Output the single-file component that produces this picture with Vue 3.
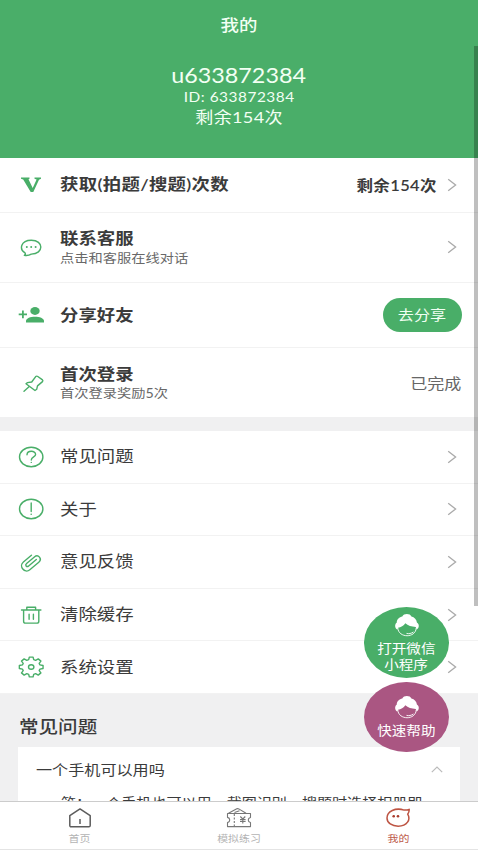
<script setup>
const accountRows = [
  { icon: 'vip', title: '获取(拍题/搜题)次数', value: '剩余154次', arrow: true, size: 'r1' },
  { icon: 'chat', title: '联系客服', sub: '点击和客服在线对话', arrow: true, size: 'r2' },
  { icon: 'invite', title: '分享好友', button: '去分享', size: 'r3' },
  { icon: 'pin', title: '首次登录', sub: '首次登录奖励5次', status: '已完成', size: 'r4' },
]
const menuRows = [
  { icon: 'help', title: '常见问题' },
  { icon: 'about', title: '关于' },
  { icon: 'clip', title: '意见反馈' },
  { icon: 'trash', title: '清除缓存' },
  { icon: 'gear', title: '系统设置' },
]

// Outline of an eight-toothed cog, slightly wider than tall
function cogPath(cx, cy) {
  const points = []
  for (let k = 0; k < 8; k++) {
    for (const [offset, scale] of [[-16, 0.76], [-9, 1], [9, 1], [16, 0.76]]) {
      const a = ((k * 45 + offset) * Math.PI) / 180
      points.push(`${(cx + Math.cos(a) * 12 * scale).toFixed(2)} ${(cy + Math.sin(a) * 10 * scale).toFixed(2)}`)
    }
  }
  return `M${points.join('L')}z`
}

const icons = {
  vip: '<path fill="#49ae68" stroke="none" d="M4 4.500h8.500v1.300l-1 .4 4.200 8.800 3.900-8.500-2.100-.7V4.500H24v1.300l-2 .9L16.300 19h-2.600L6.200 6.600 4 5.800z"/>',
  chat: '<path d="M7.300 20.300C8.500 19.800 8.600 19 8 17.900C2.200 14.600 3.400 5.200 14.300 5.200C27 5.200 27 19 14.300 19.100C12.200 20.400 9.800 20.700 7.300 20.300z"/><g fill="#49ae68" stroke="none"><circle cx="9.800" cy="12" r="1"/><circle cx="14.200" cy="12" r="1"/><circle cx="18.600" cy="12" r="1"/></g>',
  invite: '<g fill="#49ae68" stroke="none"><ellipse cx="18" cy="8" rx="4.700" ry="3.900"/><path d="M9 19.500v-1.500c0-5.800 18-5.800 18 0v1.500z"/><path d="M5 7.500h1.800v3h3.200v1.800H6.800v3H5v-3H1.700v-1.800H5z"/></g>',
  pin: '<path d="M7 20.200l5-4.400M9 12.700l1.500-1.100 4.200-.6 4-5.400q1-.9 2.100-.1l4.700 3.400q.8.800 0 1.700l-5 4.300-.8 3.400-1.700 1.200z"/>',
  help: '<ellipse cx="14.200" cy="12" rx="11.700" ry="9.700"/><path d="M10 9.700c.2-4.500 8.600-4.500 8.600-.3 0 2.600-4.300 2.300-4.300 5.600"/><circle cx="14.300" cy="17.400" r=".7" fill="#49ae68" stroke="none"/>',
  about: '<ellipse cx="14.200" cy="12" rx="11.700" ry="9.700"/><path d="M14.200 6v8.600"/><circle cx="14.200" cy="17.200" r=".8" fill="#49ae68" stroke="none"/>',
  clip: '<g transform="rotate(-40 14.200 12)"><path d="M20.500 12H10.500c-2.600 0-2.600-3.200 0-3.200h10.200c5 0 5 6.800 0 6.800H9c-6.600 0-6.600-10 0-10h10.500" transform="translate(-.8 1.400)"/></g>',
  trash: '<path d="M4.500 7h19.400M6.600 7v11.200c0 1.300.6 1.900 1.900 1.900h11.400c1.300 0 1.900-.6 1.900-1.900V7M9.800 6.800V4.200h8.800v2.600M12.100 11.200v5M16.400 11.200v5"/>',
  gear: `<path d="${cogPath(14.2, 12)}"/><ellipse cx="14.200" cy="12" rx="2.700" ry="2.300"/>`,
}
</script>

<template>
  <div class="screen">
    <main class="content">
      <header class="hero">
        <h1 class="page-title"><span class="wide mid">我的</span></h1>
        <div class="name"><span class="wide mid">u633872384</span></div>
        <div class="uid"><span class="wide mid">ID: 633872384</span></div>
        <div class="left"><span class="wide mid">剩余154次</span></div>
      </header>

      <section class="group">
        <div v-for="r in accountRows" :key="r.icon" class="row" :class="r.size">
          <svg class="icon" viewBox="0 0 28 24" v-html="icons[r.icon]"></svg>
          <div class="text">
            <div class="title strong"><span class="wide">{{ r.title }}</span></div>
            <div v-if="r.sub" class="sub"><span class="wide">{{ r.sub }}</span></div>
          </div>
          <div v-if="r.value" class="value"><span class="wide end">{{ r.value }}</span></div>
          <button v-if="r.button" class="share"><span class="wide mid">{{ r.button }}</span></button>
          <div v-if="r.status" class="status"><span class="wide end">{{ r.status }}</span></div>
          <svg v-if="r.arrow" class="arrow" viewBox="0 0 10 14"><path d="M1.200 1.200 8.600 7 1.200 12.800" /></svg>
        </div>
      </section>

      <section class="group menu">
        <div v-for="r in menuRows" :key="r.icon" class="row">
          <svg class="icon" viewBox="0 0 28 24" v-html="icons[r.icon]"></svg>
          <div class="text">
            <div class="title"><span class="wide">{{ r.title }}</span></div>
          </div>
          <svg class="arrow" viewBox="0 0 10 14"><path d="M1.200 1.200 8.600 7 1.200 12.800" /></svg>
        </div>
      </section>

      <section class="faq">
        <h2><span class="wide">常见问题</span></h2>
        <div class="card">
          <div class="question">
            <span class="wide">一个手机可以用吗</span>
            <svg viewBox="0 0 12 7"><path d="M.8 6.200 6 1l5.200 5.200" /></svg>
          </div>
          <p><span class="wide">答：一个手机也可以用，截图识别，搜题时选择相册即</span></p>
        </div>
      </section>
    </main>

    <nav class="tabs">
      <div class="tab">
        <svg viewBox="0 0 26 22" stroke="#5c5c5c"><path d="M2.800 8.700 13 1.900l10.200 6.800v9.800c0 .9-.5 1.300-1.300 1.300H4.100c-.8 0-1.300-.4-1.300-1.300zM13 12v5" /></svg>
        <span class="wide mid">首页</span>
      </div>
      <div class="tab">
        <svg viewBox="0 0 26 22" stroke="#777" class="ticket"><path d="M1.500 6.500h23v4c-3 .7-3 4.300 0 5v4.100h-23v-4c3-.8 3-4.500 0-5.200zM2.500 6.300l8.300-4.500q1-.4 2 .1L20 6.200M8.500 5.500l5-1.800" /><path stroke-dasharray="2 1.500" d="M8.300 7v12" /><path d="M14.300 9.500l2.500 2.500 2.500-2.500M14 12.600h5.600M14 14.500h5.600M16.800 12v4.600" /></svg>
        <span class="wide mid">模拟练习</span>
      </div>
      <div class="tab active">
        <svg viewBox="0 0 26 22" stroke="#bd5443"><path d="M24.200 2.300c-1.400.8-3.200.8-5 .8C10.300.2 2 4.500 2 11c0 4.900 4.900 8.200 11.200 8.200 9 0 12.700-6.700 9.500-12 .9-1.300 1.600-3 1.500-4.900z" /><g fill="#a93a2b" stroke="none"><circle cx="8.700" cy="9.300" r="1.300" /><circle cx="13" cy="9.300" r="1.300" /></g></svg>
        <span class="wide mid">我的</span>
      </div>
    </nav>

    <div class="floats">
      <div v-for="f in [['打开微信', '小程序'], ['快速帮助']]" :key="f[0]" class="bubble" :class="{ plum: f.length === 1 }">
        <svg viewBox="0 0 26 24">
          <path fill="#fff" d="M3.300 16.500C.8 15.500.4 11 2.700 9.700 2.800 6.300 5.500 4 8.300 3.500 9.500.2 16.200.2 17.400 3.500c3 .8 5.300 3 5.500 6.100 2.600 1.300 2.600 5.900-.2 6.900l-1-2.600c-4.200-.1-7.700-1.300-10.400-3.600-1.500 2.300-4.500 4.200-7.200 4.500z" />
          <path fill="none" stroke="#fff" stroke-width=".9" d="M3.800 15C4.500 25.300 21.700 25.300 22.200 15M12.500 20.400c2.500.6 4.500.2 7-1.400" />
        </svg>
        <span v-for="line in f" :key="line" class="wide mid">{{ line }}</span>
      </div>
    </div>
    <div class="scrollbar"></div>
  </div>
</template>

<style>
body { margin: 0; overflow: hidden; }
</style>

<style scoped>
.screen {
  position: relative;
  width: 478px;
  height: 850px;
  display: flex;
  flex-direction: column;
  overflow: hidden;
  background: #f0f0f1;
  color: #3b3b3b;
  font-family: Lato, "Noto Sans CJK SC", sans-serif;
}
.wide {
  display: inline-block;
  white-space: nowrap;
  transform: scaleX(1.15);
  transform-origin: left center;
}
.wide.mid { transform-origin: center; }
.wide.end { transform-origin: right center; }
.content { flex: 1; min-height: 0; overflow: hidden; }
.hero {
  box-sizing: border-box;
  height: 158px;
  padding-top: 13px;
  background: #4aae69;
  color: #f2fff3;
  text-align: center;
}
.page-title { margin: 0 0 26px; font-size: 16px; line-height: 24px; font-weight: 500; }
.name { font-size: 20.300px; line-height: 24px; }
.uid { font-size: 13.400px; line-height: 20px; letter-spacing: 0.450px; }
.left { font-size: 15.700px; line-height: 20px; letter-spacing: 0.300px; }
.group { background: #fff; }
.menu { margin-top: 14px; }
.row {
  box-sizing: border-box;
  display: flex;
  align-items: center;
  height: 52.600px;
  padding: 0 21px 0 17px;
  border-bottom: 1px solid #f2f2f2;
}
.r1 { height: 54.500px; }
.r2 { height: 70.500px; }
.r3 { height: 65px; }
.r4 { height: 69px; border-bottom: 0; }
.icon {
  width: 28px;
  height: 24px;
  margin-right: 15px;
  fill: none;
  stroke: #49ae68;
  stroke-width: 1.400;
  stroke-linejoin: round;
  stroke-linecap: round;
}
.text { flex: 1; }
.title { font-size: 16px; line-height: 22px; padding-bottom: 1px; }
.title.strong { font-weight: 600; }
.r1 .title { letter-spacing: 0.270px; }
.r4 .title { padding: 1px 0 0; }
.sub { font-size: 12.400px; line-height: 18px; color: #686868; }
.value { font-size: 14.300px; font-weight: 600; margin-right: 10px; letter-spacing: 0.350px; }
.arrow { width: 10px; height: 14px; }
.arrow path { fill: none; stroke: #aaa; stroke-width: 1.300; }
.share {
  width: 79px;
  height: 34px;
  margin-right: -5px;
  padding: 0 1px 2px 0;
  border: 0;
  border-radius: 17px;
  background: #49ae68;
  color: #f0fff2;
  font-family: inherit;
  font-size: 14px;
}
.status { margin-right: -4px; padding-bottom: 1px; font-size: 14.800px; color: #666; }
.faq { padding: 21px 18px 0; }
.faq h2 { margin: 0 1px 8px; font-size: 17px; line-height: 24px; font-weight: 500; }
.card { height: 100px; background: #fff; }
.question {
  display: flex;
  align-items: center;
  justify-content: space-between;
  height: 45px;
  padding: 0 17px 0 18px;
  font-size: 14px;
}
.question .wide { padding-bottom: 1px; }
.question svg { width: 12px; height: 7px; fill: none; stroke: #bbb; stroke-width: 1.200; }
.card p { margin: 0; padding: 1px 43px 0; font-size: 13.100px; line-height: 20px; }
.tabs {
  box-sizing: border-box;
  display: flex;
  height: 49px;
  border-top: 1px solid #ccc;
  border-bottom: 1px solid #e4e4e4;
  background: #fff;
}
.tab {
  flex: 1;
  display: flex;
  flex-direction: column;
  align-items: center;
  padding-top: 5px;
  font-size: 9.500px;
  line-height: 14px;
  color: #b4b4b4;
}
.tab svg { width: 26px; height: 22px; margin-bottom: 3px; fill: none; stroke-width: 1.500; stroke-linejoin: round; }
.tab .ticket { stroke-width: 1.100; }
.tab.active { color: #bd5a4a; }
.floats {
  position: absolute;
  left: 364px;
  top: 607px;
  display: flex;
  flex-direction: column;
  gap: 4px;
}
.bubble {
  box-sizing: border-box;
  width: 85px;
  height: 70.500px;
  padding-top: 6px;
  display: flex;
  flex-direction: column;
  align-items: center;
  border-radius: 50%;
  background: #49ae68;
  color: #fff;
  font-size: 12.700px;
  line-height: 16px;
}
.bubble svg { width: 26px; height: 24px; margin-bottom: 3px; }
.bubble.plum { background: #aa5682; padding-top: 13px; }
.scrollbar {
  position: absolute;
  right: 0;
  top: 46px;
  width: 4px;
  height: 560px;
  background: rgba(0, 0, 0, 0.25);
}
</style>
